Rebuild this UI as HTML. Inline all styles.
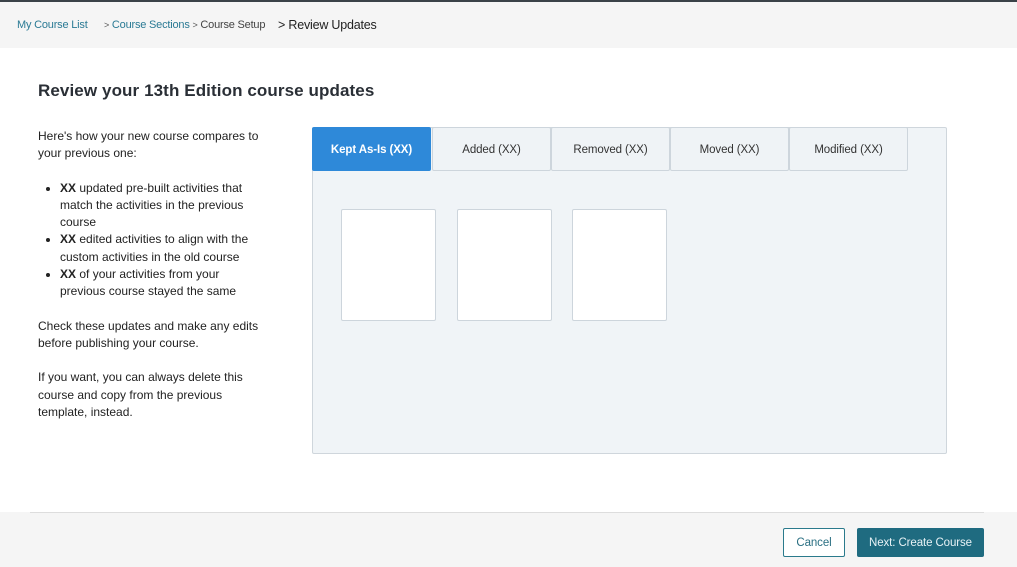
<!DOCTYPE html>
<html><head><style>
*{box-sizing:border-box;margin:0;padding:0}
body{width:1017px;height:567px;position:relative;background:#fff;font-family:"Liberation Sans",sans-serif;color:#222;overflow:hidden}
.top{position:absolute;left:0;top:0;width:1017px;height:48px;background:#f5f5f5;border-top:2px solid #3a4248}
.bc{position:absolute;top:19px;font-size:11px;white-space:nowrap;letter-spacing:-0.2px}
h1{position:absolute;left:38px;top:81px;font-size:17px;font-weight:bold;color:#2a2f36;letter-spacing:0.1px}
.txt{position:absolute;left:38px;top:128px;width:270px;font-size:12px;line-height:17.3px;color:#222;letter-spacing:0;white-space:nowrap}
.txt ul{margin:17px 0 17px 22px}
.panel{position:absolute;left:312px;top:127px;width:635px;height:327px;background:#f0f4f7;border:1px solid #cfd6dc;border-radius:2px}
.tab{position:absolute;top:127px;height:44px;width:119px;background:#eff3f6;border:1px solid #cdd5dc;font-size:11.5px;text-align:center;line-height:44px;color:#333;border-radius:2px;letter-spacing:-0.1px}
.tab.a{background:#2e89d9;color:#fff;font-weight:bold;border-color:#2e89d9}
.card{position:absolute;top:209px;width:95px;height:112px;background:#fff;border:1px solid #cdd5dc;border-radius:2px}
.foot{position:absolute;left:0;top:512px;width:1017px;height:55px;background:#f5f5f5}
.line{position:absolute;left:30px;top:512px;width:954px;height:1px;background:#ddd}
.btn{position:absolute;top:528px;height:29px;font-size:11.5px;text-align:center;line-height:30px;border-radius:2px;letter-spacing:-0.1px}
</style></head><body>
<div class="top"></div>
<div class="bc" style="left:17px;color:#2a7a94">My Course List</div>
<div class="bc" style="left:104px;color:#2a7a94"><span style="color:#555;font-size:9px">&gt;</span> Course Sections <span style="color:#555;font-size:9px">&gt;</span> <span style="color:#444">Course Setup</span></div>
<div class="bc" style="left:278px;color:#222;font-size:12.5px;top:18px">&gt; Review Updates</div>
<h1>Review your 13th Edition course updates</h1>
<div class="txt">Here's how your new course compares to<br>your previous one:
<ul><li><b>XX</b> updated pre-built activities that<br>match the activities in the previous<br>course</li><li><b>XX</b> edited activities to align with the<br>custom activities in the old course</li><li><b>XX</b> of your activities from your<br>previous course stayed the same</li></ul>
<p style="margin-bottom:17px">Check these updates and make any edits<br>before publishing your course.</p>
<p>If you want, you can always delete this<br>course and copy from the previous<br>template, instead.</p></div>
<div class="panel"></div>
<div class="tab a" style="left:312px">Kept As-Is (XX)</div>
<div class="tab" style="left:432px">Added (XX)</div>
<div class="tab" style="left:551px">Removed (XX)</div>
<div class="tab" style="left:670px">Moved (XX)</div>
<div class="tab" style="left:789px">Modified (XX)</div>
<div class="card" style="left:341px"></div>
<div class="card" style="left:457px"></div>
<div class="card" style="left:572px"></div>
<div class="foot"></div>
<div class="line"></div>
<div class="btn" style="left:783px;width:62px;background:#fff;border:1px solid #2a7a8c;color:#2a6f82;line-height:28px">Cancel</div>
<div class="btn" style="left:857px;width:127px;background:#1f6b80;color:#e8f2f5">Next: Create Course</div>
</body></html>
